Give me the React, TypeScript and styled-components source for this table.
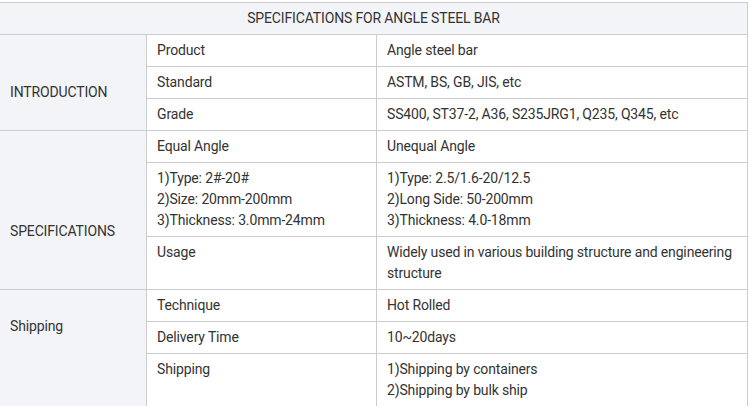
import styled, { createGlobalStyle } from "styled-components";

// Page reset and base font
const GlobalStyle = createGlobalStyle`
  html, body {
    margin: 0;
    padding: 0;
    background: #ffffff;
    overflow: hidden;
  }

  body {
    font-family: Roboto, "Liberation Sans", Arial, sans-serif;
    font-size: 14px;
    letter-spacing: -0.15px;
    color: #333333;
  }
`;

const borderColor = "#cccccc";
const shadeColor = "#f3f4f8";

const Wrapper = styled.div`
  padding-top: 2px;
`;

const SpecTable = styled.table`
  border-collapse: separate;
  border-spacing: 0;
  table-layout: fixed;
  width: 747px;
  border-top: 1px solid ${borderColor};
  border-right: 1px solid ${borderColor};
  line-height: 21px;
`;

const Caption = styled.th`
  box-sizing: border-box;
  padding: 5px 10px;
  background: ${shadeColor};
  font-weight: normal;
  text-align: center;
  border-bottom: 1px solid ${borderColor};
`;

// Group title cell; the title sits at a fixed offset from the top of its block
const GroupCell = styled.td<{ $padTop: number }>`
  box-sizing: border-box;
  padding: ${({ $padTop }) => $padTop}px 10px 5px;
  background: ${shadeColor};
  vertical-align: top;
  border-right: 1px solid ${borderColor};
  border-bottom: 1px solid ${borderColor};
`;

const Cell = styled.td<{ $last?: boolean }>`
  box-sizing: border-box;
  padding: 5px 10px;
  vertical-align: top;
  border-right: ${({ $last }) => ($last ? "none" : `1px solid ${borderColor}`)};
  border-bottom: 1px solid ${borderColor};
`;

type Row = { label: string[]; value: string[] };
type Group = { title: string; padTop: number; rows: Row[] };

const groups: Group[] = [
  {
    title: "INTRODUCTION",
    padTop: 47,
    rows: [
      { label: ["Product"], value: ["Angle steel bar"] },
      { label: ["Standard"], value: ["ASTM, BS, GB, JIS, etc"] },
      { label: ["Grade"], value: ["SS400, ST37-2, A36, S235JRG1, Q235, Q345, etc"] },
    ],
  },
  {
    title: "SPECIFICATIONS",
    padTop: 90,
    rows: [
      { label: ["Equal Angle"], value: ["Unequal Angle"] },
      {
        label: ["1)Type: 2#-20#", "2)Size: 20mm-200mm", "3)Thickness: 3.0mm-24mm"],
        value: ["1)Type: 2.5/1.6-20/12.5", "2)Long Side: 50-200mm", "3)Thickness: 4.0-18mm"],
      },
      {
        label: ["Usage"],
        value: ["Widely used in various building structure and engineering structure"],
      },
    ],
  },
  {
    title: "Shipping",
    padTop: 26,
    rows: [
      { label: ["Technique"], value: ["Hot Rolled"] },
      { label: ["Delivery Time"], value: ["10~20days"] },
      {
        label: ["Shipping"],
        value: ["1)Shipping by containers", "2)Shipping by bulk ship"],
      },
    ],
  },
];

const Lines = ({ lines }: { lines: string[] }) => (
  <>
    {lines.map((line, i) => (
      <span key={i}>
        {i > 0 && <br />}
        {line}
      </span>
    ))}
  </>
);

export default function App() {
  return (
    <>
      <GlobalStyle />
      <Wrapper>
        <SpecTable>
          <colgroup>
            <col style={{ width: 147 }} />
            <col style={{ width: 230 }} />
            <col style={{ width: 370 }} />
          </colgroup>
          <thead>
            <tr>
              <Caption colSpan={3}>SPECIFICATIONS FOR ANGLE STEEL BAR</Caption>
            </tr>
          </thead>
          <tbody>
            {groups.map((group) =>
              group.rows.map((row, i) => (
                <tr key={`${group.title}-${i}`}>
                  {i === 0 && (
                    <GroupCell rowSpan={group.rows.length} $padTop={group.padTop}>
                      {group.title}
                    </GroupCell>
                  )}
                  <Cell>
                    <Lines lines={row.label} />
                  </Cell>
                  <Cell $last>
                    <Lines lines={row.value} />
                  </Cell>
                </tr>
              ))
            )}
          </tbody>
        </SpecTable>
      </Wrapper>
    </>
  );
}
